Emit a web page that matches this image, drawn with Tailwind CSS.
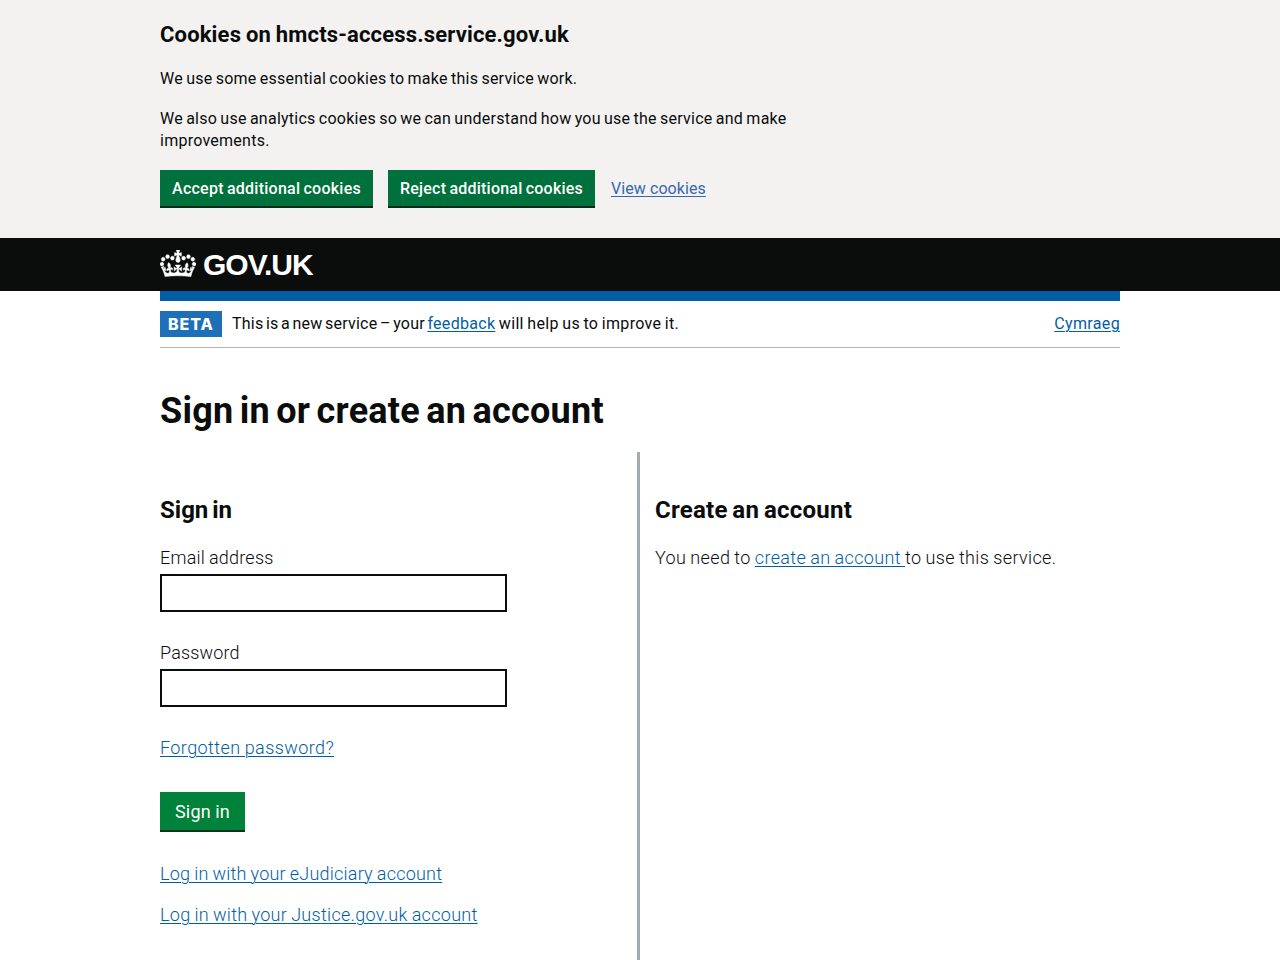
<!DOCTYPE html>
<html lang="en">
<head>
<meta charset="utf-8">
<title>Sign in or create an account - GOV.UK</title>
<script src="https://cdn.jsdelivr.net/npm/@tailwindcss/browser@4"></script>
</head>
<body class="h-[960px] overflow-hidden bg-white font-['Roboto','Liberation_Sans',sans-serif] text-[#0b0c0c]">
<div class="flex h-[960px] flex-col">
  <section class="h-[238px] shrink-0 bg-[#f3f2f1] pt-[21px]">
    <div class="mx-auto w-[960px]">
      <h2 class="mb-[19px] text-[22px] leading-7 font-bold tracking-[0.16px] [word-spacing:-0.8px]">Cookies on hmcts-access.service.gov.uk</h2>
      <div class="w-[640px] text-base leading-[22px] tracking-[0.25px] [word-spacing:-1px]">
        <p class="mb-[18px]">We use some essential cookies to make this service work.</p>
        <p class="mb-[18px]">We also use analytics cookies so we can understand how you use the service and make improvements.</p>
      </div>
      <div class="flex items-start text-base leading-[38px]">
        <button class="mr-[15px] h-9 w-[213px] bg-[#00703c] font-medium tracking-[0.25px] text-white shadow-[0_2px_0_#002d18] [word-spacing:-1px]">Accept additional cookies</button>
        <button class="mr-4 h-9 w-[207px] bg-[#00703c] font-medium tracking-[0.23px] text-white shadow-[0_2px_0_#002d18] [word-spacing:-1px]">Reject additional cookies</button>
        <a href="#" class="tracking-[0.08px] text-[#3568b0] underline decoration-1 underline-offset-2">View cookies</a>
      </div>
    </div>
  </section>
  <header class="h-[53px] shrink-0 bg-[#0b0c0c]">
    <div class="mx-auto flex h-[53px] w-[960px] items-center text-white">
      <svg class="mr-[7px] mb-[2px] h-[27px] w-9" viewBox="0 0 132 97" preserveAspectRatio="none" fill="currentColor" stroke="currentColor" stroke-width="1.5" aria-hidden="true"><path d="M25 30.2c3.5 1.5 7.7-.2 9.1-3.7 1.5-3.6-.2-7.8-3.9-9.2-3.6-1.4-7.6.3-9.1 3.9-1.4 3.5.3 7.5 3.9 9zM9 39.5c3.6 1.5 7.8-.2 9.2-3.7 1.5-3.6-.2-7.8-3.9-9.1-3.6-1.5-7.6.2-9.1 3.8-1.4 3.5.3 7.5 3.8 9zM4.4 57.2c3.5 1.5 7.7-.2 9.1-3.8 1.5-3.6-.2-7.7-3.9-9.1-3.5-1.5-7.6.3-9.1 3.8-1.4 3.5.3 7.6 3.9 9.1zm38.3-21.4c3.5 1.5 7.7-.2 9.1-3.8 1.5-3.6-.2-7.7-3.9-9.1-3.6-1.5-7.6.3-9.1 3.8-1.3 3.6.4 7.7 3.9 9.1zm64.4-5.6c-3.6 1.5-7.8-.2-9.1-3.7-1.5-3.6.2-7.8 3.8-9.2 3.6-1.4 7.7.3 9.2 3.9 1.3 3.5-.4 7.5-3.9 9zm15.9 9.3c-3.6 1.5-7.7-.2-9.1-3.7-1.5-3.6.2-7.8 3.7-9.1 3.6-1.5 7.7.2 9.2 3.8 1.5 3.5-.3 7.5-3.8 9zm4.7 17.7c-3.6 1.5-7.8-.2-9.2-3.8-1.5-3.6.2-7.7 3.9-9.1 3.6-1.5 7.7.3 9.2 3.8 1.3 3.5-.4 7.6-3.9 9.1zM89.3 35.8c-3.6 1.5-7.8-.2-9.2-3.8-1.4-3.6.2-7.7 3.9-9.1 3.6-1.5 7.7.3 9.2 3.8 1.4 3.6-.3 7.7-3.9 9.1zM69.7 17.7l8.9 4.7V9.3l-8.9 2.8c-.2-.3-.5-.6-.9-.9L72.4 0H59.6l3.5 11.2c-.3.3-.6.5-.9.9l-8.8-2.8v13.1l8.8-4.7c.3.3.6.7.9.9l-5 15.4v.1c-.2.8-.4 1.6-.4 2.4 0 4.1 3.1 7.5 7 8.1h.2c.3 0 .7.1 1 .1.4 0 .7 0 1-.1h.2c4-.6 7.1-4.1 7.1-8.1 0-.8-.1-1.7-.4-2.4V34l-5.1-15.4c.4-.2.7-.6 1-.9zM66 92.8c16.9 0 32.8 1.1 47.1 3.2 4-16.9 8.9-26.7 14-33.5l-9.6-3.4c1 4.9 1.1 7.2 0 10.2-1.5-1.4-3-4.3-4.2-8.7L108.6 76c2.8-2 5-3.2 7.5-3.3-4.4 9.4-10 11.9-13.6 11.2-4.3-.8-6.3-4.6-5.6-7.9 1-4.7 5.7-5.9 8-.5 4.3-8.7-3-11.4-7.6-8.8 7.1-7.2 7.9-13.5 2.1-21.1-8 6.1-8.1 12.3-4.5 20.8-4.7-5.4-12.1-2.5-9.5 6.2 3.4-5.2 7.9-2 7.2 3.1-.6 4.3-6.4 7.8-13.5 7.2-10.3-.9-10.9-8-11.2-13.8 2.5-.5 7.1 1.8 11 7.3L80.2 60c-4.1 4.4-8 5.3-12.3 5.4 1.4-4.4 8-11.6 8-11.6H55.5s6.4 7.2 7.9 11.6c-4.2-.1-8-1-12.3-5.4l1.4 16c3.9-5.5 8.5-7.7 10.9-7.3-.3 5.8-.9 12.8-11.1 13.8-7.2.6-12.9-2.9-13.5-7.2-.7-5 3.8-8.3 7.1-3.1 2.7-8.7-4.6-11.6-9.4-6.2 3.7-8.5 3.6-14.7-4.6-20.8-5.8 7.6-5 13.9 2.2 21.1-4.7-2.6-11.9.1-7.7 8.8 2.3-5.5 7.1-4.2 8.1.5.7 3.3-1.3 7.1-5.7 7.9-3.5.7-9-1.8-13.5-11.2 2.5.1 4.7 1.3 7.5 3.3l-4.7-15.4c-1.2 4.4-2.7 7.2-4.3 8.7-1.1-3-.9-5.3 0-10.2l-9.5 3.4c5 6.9 9.9 16.7 14 33.5 14.8-2.1 30.8-3.2 47.7-3.2z"/></svg>
      <span class="font-['Liberation_Sans',sans-serif] text-[30px] leading-none font-bold tracking-[-1px]">GOV.UK</span>
    </div>
  </header>
  <div class="mx-auto flex min-h-0 w-[960px] flex-1 flex-col">
    <div class="h-[10px] shrink-0 bg-[#005ea5]"></div>
    <div class="flex h-[47px] shrink-0 items-start border-b border-[#b1b4b6] pt-[10px] text-base">
      <strong class="mr-[10px] h-[26px] w-[62px] bg-[#1d70b8] pl-2 font-['Inter',sans-serif] leading-[26px] font-extrabold tracking-[0.9px] text-white">BETA</strong>
      <span class="leading-[26px] tracking-[0.23px]"><span class="[word-spacing:-1.7px]">This is a new service – your </span><a href="#" class="tracking-[0.3px] text-[#005ea5] underline decoration-1 underline-offset-2">feedback</a><span class="tracking-[0.32px] [word-spacing:-0.8px]"> will help us to improve it.</span></span>
      <a href="#" class="ml-auto leading-[26px] tracking-[0.35px] text-[#005ea5] underline decoration-1 underline-offset-2">Cymraeg</a>
    </div>
    <h1 class="mt-[43px] mb-[21px] text-[36px] leading-10 font-bold tracking-[0.25px] [word-spacing:-2.9px]">Sign in or create an account</h1>
    <main class="grid min-h-0 flex-1 grid-cols-2 text-[18px] leading-6 font-light tracking-[0.36px] [word-spacing:-0.7px]">
      <section class="border-r-[3px] border-[#a1acb2] pt-[43px]">
        <h2 class="mb-[21px] text-[24px] leading-[30px] font-bold tracking-[0px] [word-spacing:-2px]">Sign in</h2>
        <label for="email" class="mb-1 block tracking-[0.22px]">Email address</label>
        <input id="email" type="email" class="mb-[29px] block h-[38px] w-[347px] border-2 border-[#0b0c0c]">
        <label for="password" class="mb-1 block tracking-[0.15px]">Password</label>
        <input id="password" type="password" class="mb-[29px] block h-[38px] w-[347px] border-2 border-[#0b0c0c]">
        <p class="mb-8 tracking-[0.42px]"><a href="#" class="text-[#005ea5] underline decoration-1 underline-offset-2">Forgotten password?</a></p>
        <button class="mb-8 block h-[38px] w-[85px] bg-[#00823b] pt-px font-normal tracking-[0.15px] text-white shadow-[0_2px_0_#003618]">Sign in</button>
        <p class="mb-[17px] tracking-[0.22px]"><a href="#" class="text-[#005ea5] underline decoration-1 underline-offset-2">Log in with your eJudiciary account</a></p>
        <p class="tracking-[0.3px]"><a href="#" class="text-[#005ea5] underline decoration-1 underline-offset-2">Log in with your Justice.gov.uk account</a></p>
      </section>
      <section class="pt-[43px] pl-[15px]">
        <h2 class="mb-[21px] text-[24px] leading-[30px] font-bold tracking-[0.25px] [word-spacing:-1.5px]">Create an account</h2>
        <p>You need to <a href="#" class="text-[#005ea5] underline decoration-1 underline-offset-2">create an account </a>to use this service.</p>
      </section>
    </main>
  </div>
</div>
</body>
</html>
